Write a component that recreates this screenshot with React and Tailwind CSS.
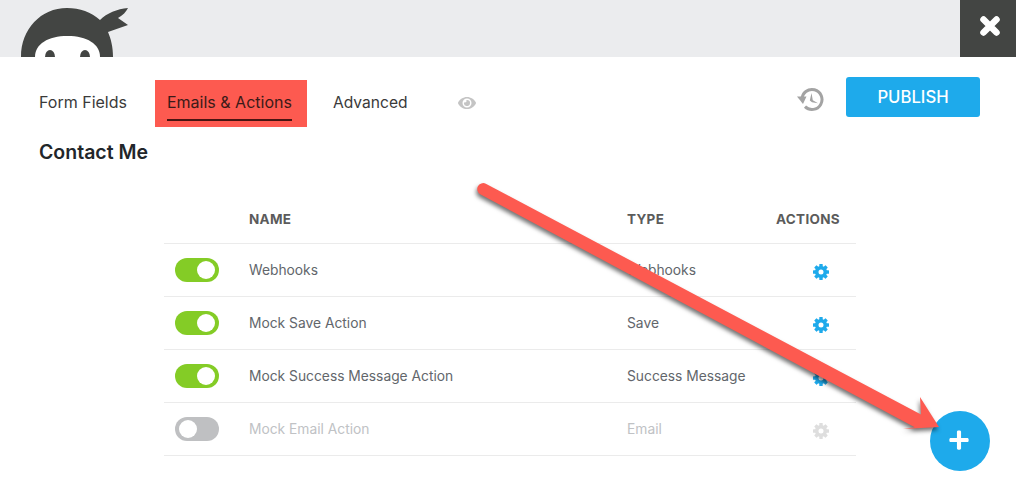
import { FaEye, FaPlus } from "react-icons/fa";

const actions = [
  { name: "Webhooks", type: "Webhooks", on: true },
  { name: "Mock Save Action", type: "Save", on: true },
  { name: "Mock Success Message Action", type: "Success Message", on: true },
  { name: "Mock Email Action", type: "Email", on: false },
];

//ninja head, cut off by the bottom of the top bar
function Logo() {
  return (
    <svg width="110" height="57" viewBox="0 0 110 57" className="ml-[21px] block">
      <path d="M0 57C0 29 20 8 46 8c13 0 24 4 33 12 7-7 17-11 28-12-2 4-5 7-10 10l10 7-20 7c3 7 5 15 5 25z" fill="#434543" />
      <path d="M14 57c0-13 13-21 32.5-21S79 44 79 57z" fill="#fff" />
      <ellipse cx="29" cy="57" rx="5" ry="7" fill="#434543" />
      <ellipse cx="64" cy="57" rx="5" ry="7" fill="#434543" />
    </svg>
  );
}

function HistoryIcon() {
  return (
    <svg width="27" height="25" viewBox="0 0 27 25" className="mt-[4px] block">
      <path d="M5 12.5a10 10 0 1 1 3 7.1" fill="none" stroke="#a3a3a3" strokeWidth="3" />
      <path d="M0 9.5l9.5 0-3.5 7.5z" fill="#a3a3a3" />
      <path d="M14.5 6l1.3 7.2 5.2 3-6-.9-2.2-1.8z" fill="#a3a3a3" />
    </svg>
  );
}

function CloseIcon() {
  return (
    <svg width="20" height="20" viewBox="0 0 20 20" className="block">
      <path d="M3.5 3.5l13 13M16.5 3.5l-13 13" fill="none" stroke="currentColor" strokeWidth="6.5" strokeLinecap="round" />
    </svg>
  );
}

//chunky gear with eight short teeth
function Gear({ className }) {
  return (
    <svg width="16" height="16" viewBox="0 0 16 16" className={className}>
      <circle cx="8" cy="8" r="4.3" fill="none" stroke="currentColor" strokeWidth="3.6" />
      {[0, 45, 90, 135, 180, 225, 270, 315].map((angle) => (
        <rect key={angle} x="6.3" y="0" width="3.4" height="4" rx="0.5" fill="currentColor" transform={`rotate(${angle} 8 8)`} />
      ))}
    </svg>
  );
}

function Toggle({ on }) {
  return (
    <div className={`flex h-6 w-11 items-center rounded-full px-1 ${on ? "justify-end bg-[#84cc26]" : "justify-start bg-[#bfc0c2]"}`}>
      <div className="h-[18px] w-[18px] rounded-full bg-white" />
    </div>
  );
}

function Arrow() {
  return (
    <svg width="1016" height="487" viewBox="0 0 1016 487" className="absolute top-0 left-0 drop-shadow-[-1px_3px_2px_rgba(0,0,0,0.55)]">
      <path
        d="M485.8 183.7L921 414.5 920 397 939 427 903 429 914.7 427.2 480.2 194.3A6 6 0 0 1 485.8 183.7z"
        fill="#fd5a50"
      />
    </svg>
  );
}

export default function App() {
  return (
    <div className="relative h-[487px] w-[1016px] overflow-hidden bg-white font-['Inter',sans-serif]">
      <div className="flex h-[57px] items-start justify-between bg-[#ebecee]">
        <Logo />
        <button className="flex h-[57px] w-14 items-center justify-center bg-[#434543] pb-[6px] pl-1 text-white">
          <CloseIcon />
        </button>
      </div>

      <div className="mt-5 flex h-[50px] items-start pr-9 pl-[39px]">
        <div className="mt-[3px] flex h-[47px] items-start text-[16px] text-[#3a3a3a]">
          <div className="pt-[10px]">Form Fields</div>
          <div className="ml-[28px] h-[47px] w-[152px] bg-[#fd5a50] px-3 pt-[10px] text-[#3b1a18]">
            <div className="h-[31px] w-[125px] border-b-2 border-[#4a1512]">Emails &amp; Actions</div>
          </div>
          <div className="ml-[26px] pt-[11px] text-[15.6px]">Advanced</div>
          <FaEye size={18} className="mt-[14px] ml-[50px] text-[#c4c4c4]" />
        </div>
        <div className="ml-auto flex items-center">
          <HistoryIcon />
          <button className="ml-[22px] h-10 w-[134px] rounded-[3px] bg-[#1eaaeb] pt-[2px] text-[16.7px] font-medium text-white">PUBLISH</button>
        </div>
      </div>

      <h1 className="mt-[12px] ml-[39px] h-[26px] text-[19.5px] leading-[26px] font-semibold text-[#22262a]">Contact Me</h1>

      <table className="mt-[31px] ml-[164px] w-[692px] table-fixed border-collapse text-[13.8px] text-[#62666b]">
        <thead>
          <tr className="h-[47px] border-b border-[#ebebeb] text-left text-[13.5px] tracking-[0.3px] text-[#5b5b5b]">
            <th className="w-[85px]" />
            <th className="w-[378px] font-bold">NAME</th>
            <th className="w-[149px] font-bold">TYPE</th>
            <th className="w-20 font-bold">ACTIONS</th>
          </tr>
        </thead>
        <tbody>
          {actions.map((action) => (
            <tr key={action.name} className={`h-[53px] border-b border-[#ebebeb] ${action.on ? "" : "text-[#c0c2c5]"}`}>
              <td className="pl-[11px]"><Toggle on={action.on} /></td>
              <td className="pt-[2px]">{action.name}</td>
              <td className="pt-[2px]">{action.type}</td>
              <td className="pl-[37px]">
                <Gear className={action.on ? "mt-1 text-[#1eaaeb]" : "mt-1 text-[#dedede]"} />
              </td>
            </tr>
          ))}
        </tbody>
      </table>

      <button className="absolute top-[411px] left-[930px] flex h-[60px] w-[60px] items-center justify-center rounded-full bg-[#1eaaeb] pr-[2px] pb-[2px] text-white">
        <FaPlus size={22} />
      </button>
      <Arrow />
    </div>
  );
}
